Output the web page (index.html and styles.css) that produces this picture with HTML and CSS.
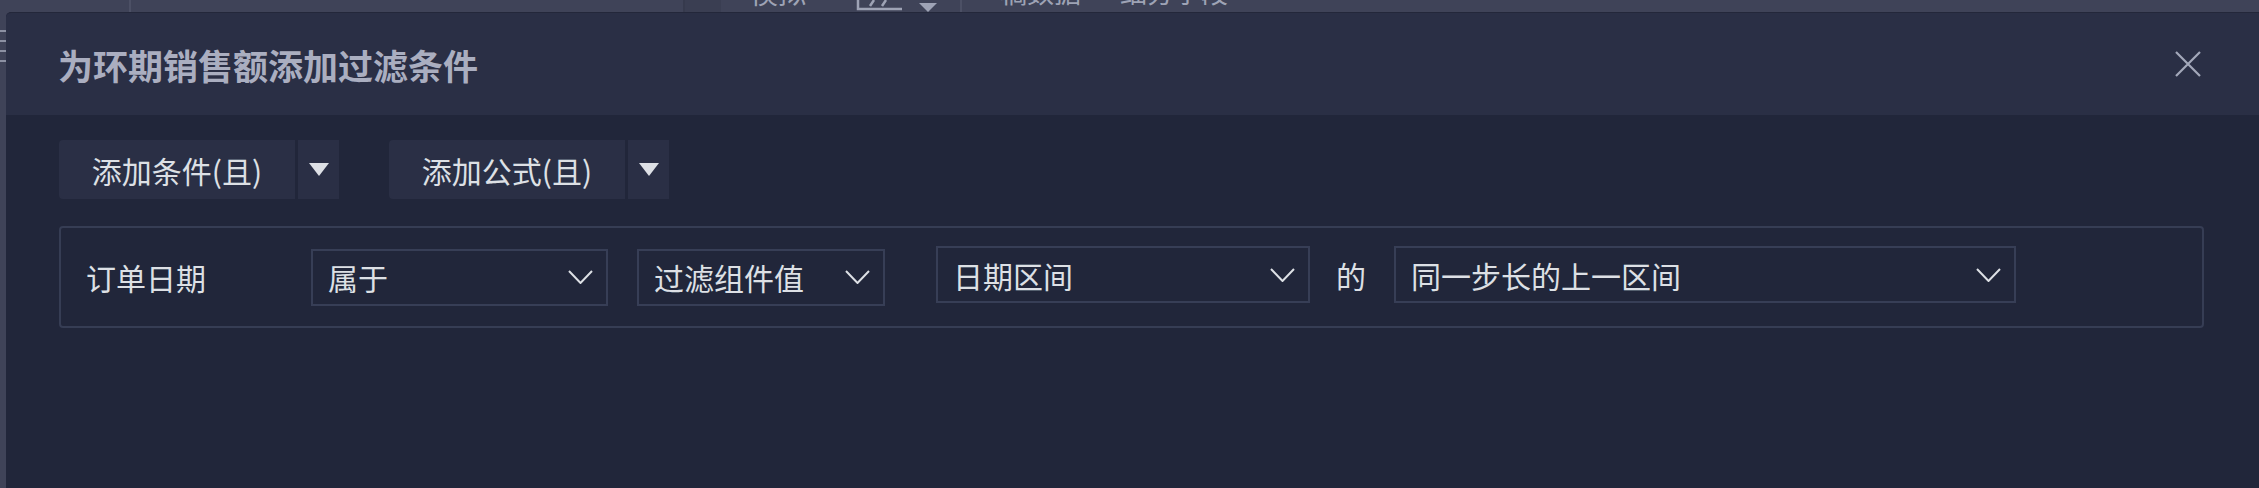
FILE: index.html
```html
<!DOCTYPE html>
<html lang="zh-CN">
<head>
    <meta charset="UTF-8">
    <meta name="viewport" content="width=device-width, initial-scale=1.0">
    <title>为环期销售额添加过滤条件</title>
    <link rel="stylesheet" href="styles.css">
</head>
<body>
    <div class="app">
        <!-- barra superior do app, quase toda coberta pelo diálogo -->
        <div class="topbar">
            <div class="tb-space tb-first"></div>
            <div class="tb-divider"></div>
            <div class="tb-space tb-second"></div>
            <div class="tb-divider dark"></div>
            <div class="tb-block"></div>
            <span class="tb-text">模拟</span>
            <svg class="tb-icon" width="48" height="12" viewBox="0 0 48 12">
                <path d="M2 0 V9 H46" stroke="#9ea3b5" stroke-width="2.5" fill="none"/>
                <path d="M14 6 L18 0 M26 6 L30 0" stroke="#9ea3b5" stroke-width="2.5" fill="none"/>
            </svg>
            <svg class="tb-caret" width="18" height="12" viewBox="0 0 18 12">
                <path d="M0 3 H18 L9 12 Z" fill="#9ea3b5"/>
            </svg>
            <div class="tb-divider"></div>
            <span class="tb-text tb-last">稿数据 一 细分字段</span>
        </div>
        <div class="sidebar">
            <span class="side-line"></span>
            <span class="side-line"></span>
            <span class="side-line"></span>
            <span class="side-line"></span>
        </div>

        <div class="dialog">
            <div class="dialog-header">
                <h2 class="dialog-title">为环期销售额添加过滤条件</h2>
                <button class="close-btn" title="关闭">
                    <svg width="26" height="26" viewBox="0 0 26 26">
                        <path d="M1 1 L25 25 M25 1 L1 25" stroke="#a3a8ba" stroke-width="2.2"/>
                    </svg>
                </button>
            </div>
            <div class="dialog-body">
                <div class="toolbar">
                    <div class="split-btn">
                        <button class="split-main">添加条件(且)</button>
                        <button class="split-arrow">
                            <svg width="20" height="13" viewBox="0 0 20 13"><path d="M0 0 H20 L10 13 Z" fill="#dde0e5"/></svg>
                        </button>
                    </div>
                    <div class="split-btn">
                        <button class="split-main">添加公式(且)</button>
                        <button class="split-arrow">
                            <svg width="20" height="13" viewBox="0 0 20 13"><path d="M0 0 H20 L10 13 Z" fill="#dde0e5"/></svg>
                        </button>
                    </div>
                </div>

                <div class="filter-row">
                    <span class="field-name">订单日期</span>
                    <div class="select sel-op">
                        <span>属于</span>
                        <svg class="chevron" width="25" height="14" viewBox="0 0 25 14"><path d="M1 1 L12.5 13 L24 1" stroke="#dde0e5" stroke-width="2" fill="none"/></svg>
                    </div>
                    <div class="select sel-source">
                        <span>过滤组件值</span>
                        <svg class="chevron" width="25" height="14" viewBox="0 0 25 14"><path d="M1 1 L12.5 13 L24 1" stroke="#dde0e5" stroke-width="2" fill="none"/></svg>
                    </div>
                    <div class="select sel-range">
                        <span>日期区间</span>
                        <svg class="chevron" width="25" height="14" viewBox="0 0 25 14"><path d="M1 1 L12.5 13 L24 1" stroke="#dde0e5" stroke-width="2" fill="none"/></svg>
                    </div>
                    <span class="joiner">的</span>
                    <div class="select sel-period">
                        <span>同一步长的上一区间</span>
                        <svg class="chevron" width="25" height="14" viewBox="0 0 25 14"><path d="M1 1 L12.5 13 L24 1" stroke="#dde0e5" stroke-width="2" fill="none"/></svg>
                    </div>
                </div>
            </div>
        </div>
    </div>
</body>
</html>
```

FILE: styles.css
```css
body {
    margin: 0;
    background-color: #3f4358;
    font-family: "Noto Sans CJK SC", "Noto Sans", sans-serif;
    color: #dde0e5;
    overflow: hidden;
}
.app {
    display: grid;
    grid-template-columns: 6px 1fr;
    grid-template-rows: 12px 1fr;
    height: 488px;
}

/* barra de cima (fundo) */
.topbar {
    grid-column: 1 / 3;
    display: flex;
    align-items: flex-end;
    overflow: hidden;
    background-color: #3f4358;
}
.tb-space { height: 12px; }
.tb-first { width: 129px; }
.tb-second { width: 552px; }
.tb-divider {
    width: 2px;
    height: 12px;
    background-color: #4c5065;
}
.tb-divider.dark { background-color: #363a4d; }
.tb-block {
    width: 36px;
    height: 12px;
    background-color: #3a3e52;
}
.tb-text {
    font-size: 28px;
    line-height: 28px;
    color: #9ea3b5;
    margin-left: 29px;
    margin-bottom: 6px;
    white-space: nowrap;
}
.tb-icon { margin-left: 50px; }
.tb-caret { margin-left: 15px; margin-right: 23px; }
.tb-last { margin-left: 38px; font-size: 27px; }

.sidebar {
    display: flex;
    flex-direction: column;
    gap: 8px;
    padding-top: 18px;
    overflow: hidden;
}
.side-line {
    display: block;
    width: 6px;
    height: 2px;
    background-color: #8c91a3;
}

/* diálogo */
.dialog {
    background-color: #21263a;
    border-top: 1px solid #23273a;
    border-top-left-radius: 5px;
    overflow: hidden;
}
.dialog-header {
    height: 102px;
    display: flex;
    align-items: center;
    justify-content: space-between;
    padding: 0 58px 0 52px;
    background-color: #2a2f45;
}
.dialog-title {
    margin: 0;
    font-size: 35px;
    font-weight: 700;
    color: #aaaec0;
}
.close-btn {
    background: none;
    border: none;
    padding: 0;
    display: flex;
    cursor: pointer;
}
.dialog-body {
    padding: 25px 55px 0 53px;
}

/* botões de adicionar */
.toolbar {
    display: flex;
    gap: 50px;
}
.split-btn {
    display: flex;
    gap: 3px;
}
.split-main,
.split-arrow {
    height: 59px;
    border: none;
    background-color: #2a2f45;
    color: #dde0e5;
    font-family: inherit;
    cursor: pointer;
}
.split-main {
    width: 236px;
    font-size: 30px;
    padding: 0;
    border-radius: 4px 0 0 4px;
}
.split-arrow {
    width: 41px;
    padding: 0;
    display: flex;
    align-items: center;
    justify-content: center;
}

/* linha de filtro */
.filter-row {
    margin-top: 27px;
    height: 102px;
    box-sizing: border-box;
    border: 2px solid #363d54;
    border-radius: 4px;
    display: flex;
    align-items: center;
    padding: 0 25px;
    font-size: 30px;
}
.field-name {
    width: 225px;
    flex-shrink: 0;
}
.select {
    height: 57px;
    box-sizing: border-box;
    border: 2px solid #373e56;
    display: flex;
    align-items: center;
    justify-content: space-between;
    padding: 0 13px 0 15px;
    flex-shrink: 0;
}
.sel-op { width: 297px; }
.sel-source { width: 248px; margin-left: 29px; }
.sel-range { width: 374px; margin-left: 51px; margin-bottom: 5px; }
.sel-period { width: 622px; margin-bottom: 5px; }
.joiner {
    margin: 0 28px 5px 26px;
}
```
